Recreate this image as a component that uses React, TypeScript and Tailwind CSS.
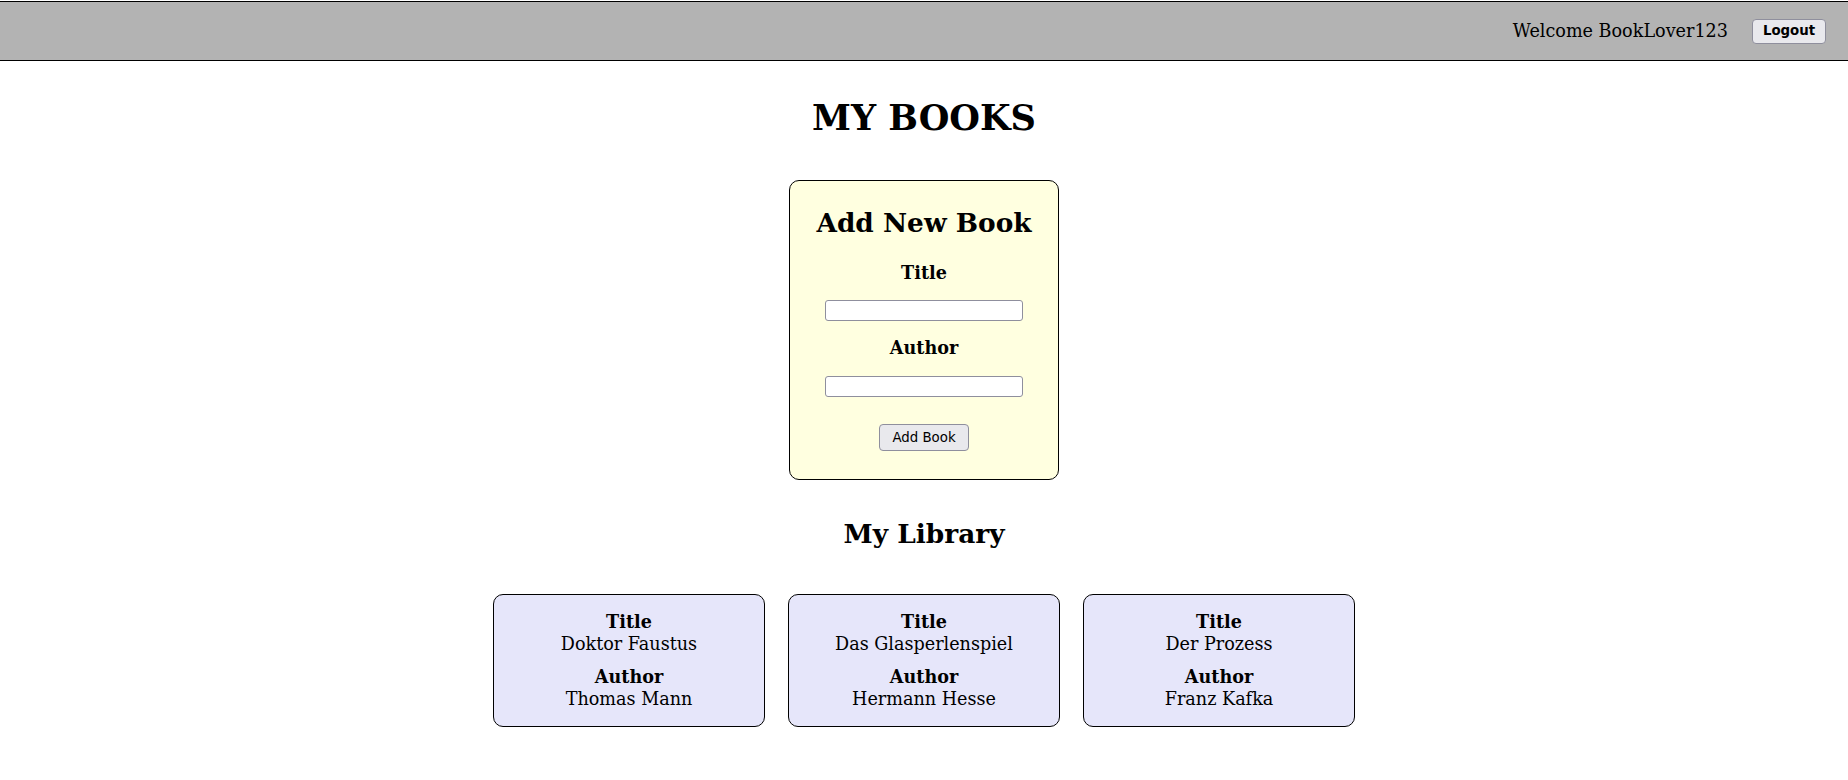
const books = [
  { title: "Doktor Faustus", author: "Thomas Mann" },
  { title: "Das Glasperlenspiel", author: "Hermann Hesse" },
  { title: "Der Prozess", author: "Franz Kafka" },
];

const serif = "font-['DejaVu_Serif',serif]";

const BookCard = ({ title, author }: { title: string; author: string }) => {
  return (
    <div className="flex w-[272px] h-[133px] flex-col items-center rounded-[10px] border border-black bg-[#e6e6fa] pt-4 text-[17.6px] leading-[22px]">
      <span className="font-bold">Title</span>
      <span>{title}</span>
      <span className="mt-[11px] font-bold">Author</span>
      <span>{author}</span>
    </div>
  );
};

export default function App() {
  return (
    <div className={`min-h-screen bg-white text-black text-[17.6px] ${serif}`}>
      <header className="mt-px flex h-[60px] items-center justify-end gap-6 border-y border-black bg-[#b3b3b3] pr-[22px]">
        <span>Welcome BookLover123</span>
        <button className="h-[25px] w-[74px] rounded-[4px] border border-[#8f8f9d] bg-[#e9e9ed] font-['DejaVu_Sans',sans-serif] text-[13.33px] font-bold">
          Logout
        </button>
      </header>

      <main className="flex flex-col items-center">
        <h1 className="mt-[35px] text-[35.2px] font-bold leading-[44px]">MY BOOKS</h1>

        <form
          onSubmit={(e) => e.preventDefault()}
          className="mt-10 flex h-[300px] w-[270px] flex-col items-center rounded-[10px] border border-black bg-[#ffffe0] pt-[26px]"
        >
          <h2 className="text-[26.4px] font-bold leading-8">Add New Book</h2>
          <label className="mt-[22px] text-[17.6px] font-bold leading-6">Title</label>
          <input className="mt-[15px] h-[21px] w-[198px] rounded-[3px] border border-[#8f8f9d] bg-white" />
          <label className="mt-[15px] text-[17.6px] font-bold leading-6">Author</label>
          <input className="mt-4 h-[21px] w-[198px] rounded-[3px] border border-[#8f8f9d] bg-white" />
          <button
            type="submit"
            className="mt-[27px] h-[27px] w-[90px] rounded-[4px] border border-[#8f8f9d] bg-[#e9e9ed] font-['DejaVu_Sans',sans-serif] text-[13.33px]"
          >
            Add Book
          </button>
        </form>

        <h2 className="mt-[38px] text-[26.4px] font-bold leading-8">My Library</h2>

        <div className="mt-[44px] flex gap-[23px]">
          {books.map((b) => (
            <BookCard key={b.title} title={b.title} author={b.author} />
          ))}
        </div>
      </main>
    </div>
  );
}
